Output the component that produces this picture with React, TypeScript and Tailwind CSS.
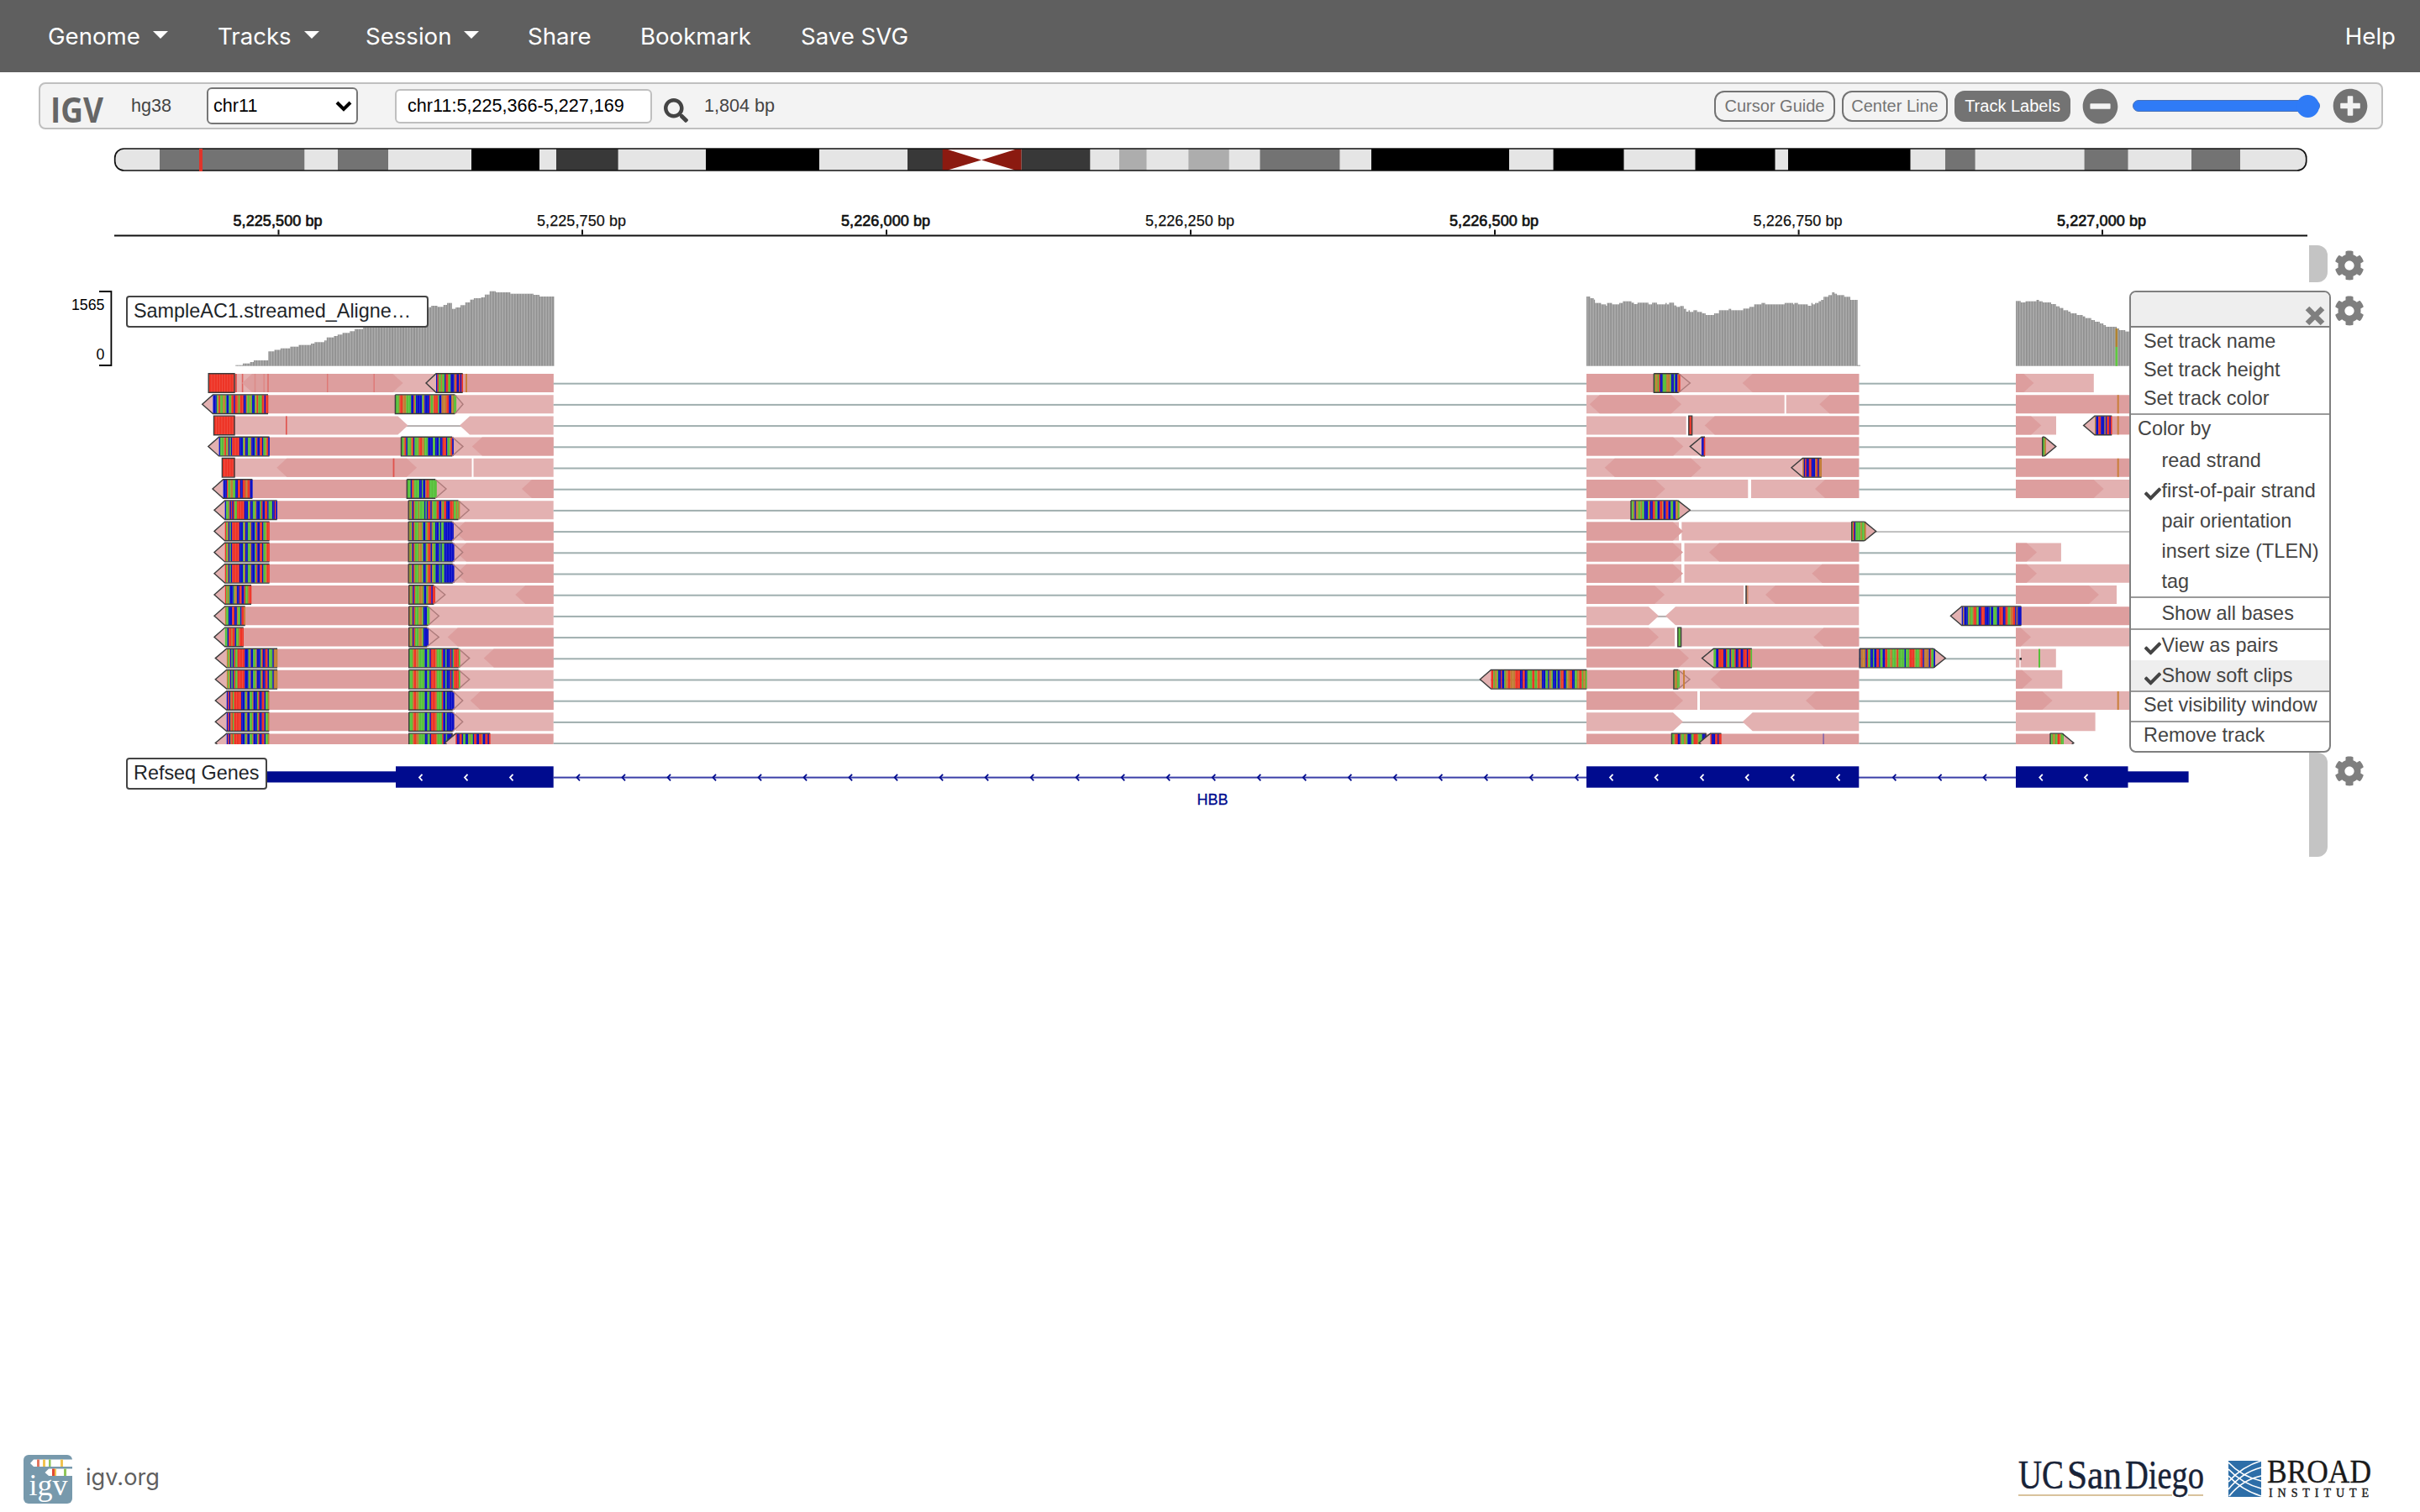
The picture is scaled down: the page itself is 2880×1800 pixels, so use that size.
import React from "react";
import { FaCog, FaSearch, FaCheck, FaMinusCircle, FaPlusCircle } from "react-icons/fa";

const BP = 1.447;
const ROW_TOP = 445;
const ROW_PITCH = 25.2;
const ROW_H = 22;

const NT: Record<string, string> = { A: "#57c03a", C: "#0c10c6", G: "#c17d34", T: "#ee3426" };

const L1 = "TAGCACTTTTTTCCCAGCCAAGCCCATCCTTCAAGT";
const L6 = "CAAGCTCTAATTTTTTCCCAGCCAAGCCCATCCTTCAAACCTC";
const LG = "GAGCACTAATTTTTTCCCAGCCAAGCCCATCCTTCAAACGGG";
const LB = "CTCGTATTTTTTCCCAGCCAAGCCCATCCTTCAAGT";
const LS = "TAGACCCAGGCCTTCCTAAGTT";
const LX = "CCCAGTAAGGACCAATTCTTGATTTCCGAAGACCAGTAAATTCTTT";
const R1 = "GAGCTAAAGGGACCAGTTCGAACCCACAACCCCCCCCC";
const R2 = "AAAGTTGGAAAAACCAACTTTTGAAAATCCACCCTCATTTT";
const R3 = "AAAGTTGGGAAAACCTACCCCCAGCCCCTAAGTTTACCGGGG";

type Shape =
  | { k: "d" | "l"; a: number; b: number; la?: boolean; ra?: boolean }
  | { k: "s"; a: number; b: number; q: string; tip?: number }
  | { k: "m"; a: number; w: number; c: string; o?: number }
  | { k: "dot"; a: number }
  | { k: "g"; a: number; b: number; c?: string };

const d = (a: number, b: number, la = false, ra = false): Shape => ({ k: "d", a, b, la, ra });
const l = (a: number, b: number, la = false, ra = false): Shape => ({ k: "l", a, b, la, ra });
const s = (a: number, b: number, q: string, tip?: number): Shape => ({ k: "s", a, b, q, tip });
const m = (a: number, w: number, c: string, o = 1): Shape => ({ k: "m", a, w, c, o });
const g = (a: number, b: number, c = "#a0afaf"): Shape => ({ k: "g", a, b, c });

const E1 = 658.7;
const E2 = 1888;
const E2R = 2212.3;
const E3 = 2399;
const END = 2540;
const GREY = "#bfbfbf";
const OR = "#c97f3a";
const RD = "#e0524c";

const rows: Shape[][] = [
  [
    l(279, E1), s(248.2, 279, "T"), m(280, 1.8, RD), m(287.8, 1.6, RD, 0.8), d(288, 479.5, true, true),
    m(302.8, 1.4, RD, 0.25), m(313.5, 1.4, RD, 0.3), m(318, 2, RD, 0.5), m(389, 1.4, RD, 0.5), m(444.5, 1.4, RD, 0.5),
    d(550.7, E1), s(519, 550.7, "CTAAGAACTTAACCCGTCCTCT", 507), m(554, 2, OR),
    g(E1, E2), l(E2, E2R), d(E2, 1968.3), s(1968.3, 1999.3, "AGGATCCAAAGGGACCACCGTTCT", 2011.3), d(2073.7, E2R, true),
    g(E2R, E3), l(E3, 2491.8), d(E3, 2420.4, false, true),
  ],
  [
    d(319, 470.4), l(539, E1), s(253.4, 319, LX, 240.7), s(470.4, 542.8, R3 + "TTCCGG", 551),
    g(E1, E2), l(E2, 2123.7), l(2125.7, E2R), d(1891.7, 2001, true, true), d(2165.3, E2R, true),
    g(E2R, E3), d(E3, END), m(2519.7, 2, OR),
  ],
  [
    g(470, 560, "#b5b0b0"), l(279, 485.5, false, true), s(254.5, 279, "T"), m(340, 1.6, RD), l(547, E1, true),
    g(E1, E2), l(E2, 2006.7), l(2009.3, E2R), s(2009.8, 2013.6, "TT"), d(2028.7, E2R, true),
    g(E2R, E3), l(E3, 2447), d(E3, 2429.3, false, true), d(2510, END), s(2492.9, 2513.2, "GCCTTCCCGCTTCT", 2479.6), m(2519.7, 2, OR),
  ],
  [
    d(320.6, 477.5), l(539, E1), s(260.5, 320.6, "CAAAG" + L1, 247.8), s(477.5, 539.6, "AAGTCAAAGTCAAAGTTGGAAACCCCAACCCACCTTTC", 551), d(561.8, E1, true),
    g(E1, E2), l(E2, E2R), d(E2, 2003.3, false, true), d(2029, E2R), s(2025, 2029, "CCT", 2011.3),
    g(E2R, E3), d(E3, 2431), s(2430.7, 2434.6, "AAG", 2446.8),
  ],
  [
    l(279, 561.5), l(563.5, E1), s(264.4, 279, "T"), d(329.3, 496, true, true), m(467.6, 1.8, RD),
    g(E1, E2), l(E2, E2R), d(1909.7, 2024.7, true, true), d(2160, E2R), s(2145.3, 2167.7, "GCTCCTTCCCGTCGG", 2132),
    g(E2R, E3), d(E3, END), m(2519.7, 2, OR),
  ],
  [
    d(300.4, 484.3), l(517, E1), s(265.6, 300.4, "CCCTAAGGAACCTTCCTTGGTT", 253), s(484.3, 519.5, "AAACTGAAAACCACCGTTAAA", 531), d(621, E1, true),
    g(E1, E2), l(E2, 2080.3), l(2084, E2R), d(E2, 1981.7, false, true), d(2160, E2R, true),
    g(E2R, E3), l(E3, END), d(E3, 2503.6, false, true),
  ],
  [
    d(329.7, 486.2), l(545, E1), s(267.6, 329.7, L6, 255), s(486.2, 547, "GAGCTAAAGAAAACACTTCGAAATTCCGATTCCCTTTAA", 558.2),
    g(E1, E2), g(2011, END, GREY), l(E2, 1942), s(1941, 1998.3, "AAGCGGAAGAACCCATCCTTAACCTTGCCTTCCAACCGG", 2011.3),
  ],
  [
    d(320.6, 486.2), l(539, E1), d(541, E1, true), s(267.6, 320.6, L1, 255), s(486.2, 539.6, R1, 550),
    g(E1, E2), g(2232, END, GREY), l(E2, 1998), l(2001.3, 2204), d(E2, 2003, false, true), s(2203.7, 2220.3, "ATCAAAAGAAGG", 2232.7),
  ],
  [
    d(320.6, 486.2), l(539, E1), d(543, E1, true), s(267.6, 320.6, L1, 255), s(486.2, 540.3, R1, 550.7),
    g(E1, E2), l(E2, 2001), l(2004.5, E2R), d(E2, 2003, false, true), d(2034, E2R, true),
    g(E2R, E3), l(E3, 2452.9), d(E3, 2424, false, true),
  ],
  [
    d(320.6, 486.2), l(539, E1), d(543, E1, true), s(267.6, 320.6, L1, 255), s(486.2, 540.3, R1, 550.7),
    g(E1, E2), l(E2, 2001), l(2004.5, E2R), d(E2, 2003, false, true), d(2156.4, E2R, true),
    g(E2R, E3), l(E3, END), d(E3, 2424, false, true),
  ],
  [
    d(299, 486.7), l(516, E1), s(267.7, 299, LS, 255), s(486.7, 517.7, "GAGCTAAAGGGACCAGTTCTT", 529.7), d(613.3, E1, true),
    g(E1, E2), l(E2, 2075), l(2077.3, E2R), m(2077.3, 1.6, "#3c3c3c"), m(2078.9, 1.6, "#d08a6a"), d(E2, 1981, false, true), d(2101, E2R, true),
    g(E2R, E3), l(E3, 2519), d(E3, 2497.9, false, true),
  ],
  [
    d(291.7, 486.7), l(509, E1), s(267.7, 291.7, "GAACCCTTCCGAACTT", 255), s(486.7, 511, "GAGCTAAAGGGACCCAA", 522.3),
    g(E1, E2), g(1962, 1994, "#b5b0b0"), l(E2, 1974, false, true), l(1982, E2R, true),
    d(2405, END), s(2334.6, 2405.4, "CGCCCAGAAGTTAACCTTTCCCCACCAAACCTTTCCTTAAGGTT", 2321.4),
  ],
  [
    d(289.7, 486.7), l(508, E1), s(267.7, 289.7, "AACTTGTTCAAGTTTT", 255), s(486.7, 509.7, "GAGCTAAAGGGACCCC", 522.3), d(532.7, E1, true),
    g(E1, E2), l(E2, 1993), l(1996, E2R), s(1996.8, 2000.6, "A"), d(E2, 1974, false, true), d(2158.3, E2R, true),
    g(E2R, E3), l(E3, END), d(E3, 2417, false, true),
  ],
  [
    d(330, 486.7), l(545, E1), s(269.7, 330, LG, 256.3), s(486.7, 547.3, R2, 558.7), d(575.7, E1, true),
    g(E1, E2), l(E2, E2R), d(E2, 2010, false, true), d(2084, E2R), s(2039.3, 2084.8, "AACCTTTTCCTAACGAATCCTTCCTTTCTT", 2025.5),
    g(E2R, E3), s(2213, 2302.7, "CGGGGCTAACCACCTTCAACCTTAAGGAAAGTAAAAACAAATTTTGAAAGTT", 2315.3), l(E3, 2403.4), l(2404.6, 2446.8), { k: "dot", a: 2404 }, m(2426, 2, NT.A),
  ],
  [
    d(330, 486.7), l(545, E1), s(269.7, 330, LG, 256.3), s(486.7, 547.3, R2, 558.7),
    g(E1, E2), l(E2, E2R), d(E2, 1993), s(1774.4, 1888.3, "TTAGGACCTCCAGGTTGGGGTTTTCCTTCCAAAATTAAGTGGCCCAACGGACCCACCGTTCCAGGTTCCAAGG", 1761.4), s(1991.9, 1998.6, "AGGAA", 2011), m(2003, 2, OR), d(2035.8, E2R, true),
    g(E2R, E3), l(E3, 2454.3), d(E3, 2418.6, false, true),
  ],
  [
    d(320.3, 486.7), l(539, E1), s(269.7, 320.3, LB, 256.3), s(486.7, 540.3, R2.slice(0, 33) + "CCCC", 550.7), d(559.7, E1, true),
    g(E1, E2), l(E2, 2020), l(2023, E2R), d(E2, 2003, false, true), d(2149, E2R, true),
    g(E2R, E3), l(E3, END), d(E3, 2442.5, false, true), m(2519.7, 2, OR),
  ],
  [
    d(320.3, 486.7), l(542, E1), s(269.7, 320.3, LB, 256.3), s(486.7, 540.3, R2.slice(0, 33) + "CCCC", 550.7),
    g(E1, E2), g(1991, 2086, "#b5b0b0"), l(E2, 2003, false, true), l(2073.7, E2R, true),
    g(E2R, E3), l(E3, 2493.6),
  ],
  [
    d(320.3, E1), s(269.7, 320.3, LB, 256.3), s(486.7, 538, R2.slice(0, 33) + "CC"), s(542.3, 583.3, "TCCTTCAACCAGAACTTCCTTGCCTTCT", 529.3),
    g(E1, E2), d(E2, E2R), s(1989.5, 2030, "AAGTTCCGAAGGACCCAATTTGAAACCC"), s(2035.4, 2048.4, "TCCCTTCTT", 2022), m(2169.3, 1.6, "#4a3fb0", 0.6),
    g(E2R, E3), d(E3, 2440), s(2440, 2455.7, "AAGGAATTGAAA", 2467.9),
  ],
];

function Strand({ sh, y }: { sh: Shape; y: number }) {
  const mid = y + ROW_H / 2;
  const bot = y + ROW_H;
  if (sh.k === "g") return <rect x={sh.a} y={mid - 0.3} width={sh.b - sh.a} height={2} fill={sh.c} />;
  if (sh.k === "dot") return <rect x={sh.a - 0.5} y={mid - 0.5} width={2.5} height={2.5} fill="#222" />;
  if (sh.k === "m") return <rect x={sh.a} y={y} width={sh.w} height={ROW_H} fill={sh.c} opacity={sh.o} />;
  if (sh.k === "s") {
    const n = Math.max(1, Math.round((sh.b - sh.a) / BP));
    const w = (sh.b - sh.a) / n;
    const left = sh.tip !== undefined && sh.tip < sh.a;
    const right = sh.tip !== undefined && !left;
    const base = right ? sh.b - 1.5 : sh.b;
    const covered = sh.b < 600 || (sh.b > 1998.5 && sh.b < 2000);
    return (
      <g>
        {left && <path d={`M${sh.a} ${y}L${sh.tip} ${mid}L${sh.a} ${bot}Z`} fill="#e3b1b1" />}
        {right && <path d={`M${base} ${y}L${sh.tip} ${mid}L${base} ${bot}Z`} fill="#e0a9a9" />}
        {Array.from({ length: n }, (_, i) => (
          <rect key={i} x={sh.a + i * w} y={y} width={w + 0.3} height={ROW_H} fill={NT[sh.q[i % sh.q.length]]} />
        ))}
        <path
          d={
            left
              ? `M${sh.b} ${y - 0.3}H${sh.a}L${sh.tip} ${mid}L${sh.a} ${bot + 0.3}H${sh.b}`
              : right
                ? `M${sh.a} ${y - 0.3}H${base}M${base} ${bot + 0.3}H${sh.a}V${y - 0.3}`
                : `M${sh.a} ${y - 0.3}H${sh.b}V${bot + 0.3}H${sh.a}Z`
          }
          fill="none"
          stroke="#3c3c3c"
          strokeWidth={1.4}
        />
        {right && (
          <path
            d={`M${base} ${y - 0.3}L${sh.tip} ${mid}L${base} ${bot + 0.3}`}
            fill="none"
            stroke={covered ? "#ad7b7b" : "#3c3c3c"}
            strokeWidth={1.4}
          />
        )}
      </g>
    );
  }
  const a = sh.la ? sh.a + 12 : sh.a;
  const b = sh.ra ? sh.b - 12 : sh.b;
  return (
    <path
      d={`M${a} ${y}H${b}${sh.ra ? `L${sh.b} ${mid}L${b} ${bot}` : `V${bot}`}H${a}${sh.la ? `L${sh.a} ${mid}` : ""}Z`}
      fill={sh.k === "d" ? "#dd9e9e" : "#e3b1b1"}
    />
  );
}

const COV_BASE = 435.7;
const cov: { start: number; end: number; pts: [number, number][] }[] = [
  {
    start: 280.3,
    end: 658.7,
    pts: [
      [280, 434.7], [289, 432.7], [297, 431], [302, 429], [313, 429], [319, 427.3], [320, 418.3], [327, 416.5], [334, 414.7], [345, 412.7],
      [356, 410.7], [370, 409], [374, 407.3], [386, 405.3], [389, 401.7], [397, 400], [402, 398.3], [408, 396.3], [416, 394.3], [422, 391.7],
      [432, 390], [440, 384], [460, 378], [480, 372], [500, 368], [511, 365.7], [513, 364], [521, 365.3], [527, 363], [532.5, 360.7],
      [538, 367.7], [542, 366], [548, 363.3], [554, 360], [559, 356.7], [564, 355], [572, 354], [577, 350.7], [582, 346.7], [590, 348],
      [608, 349.7], [635, 351], [642, 353], [658, 353],
    ],
  },
  {
    start: 1888,
    end: 2210,
    pts: (
      [
        [444, 69], [459, 75], [468, 80], [475, 92], [498, 97], [513, 102], [519, 92], [536, 97], [563, 92], [573, 86], [605, 91], [614, 96],
        [626, 91], [665, 97], [680, 91], [694, 97], [724, 92], [731, 97], [740, 91], [757, 101], [765, 106], [778, 103], [790, 113],
        [800, 123], [808, 118], [812, 124], [826, 118], [838, 124], [858, 129], [871, 135], [899, 129], [919, 118], [950, 113], [962, 118],
        [1004, 112], [1027, 106], [1042, 97], [1070, 92], [1082, 97], [1151, 92], [1182, 97], [1188, 92], [1200, 97], [1232, 102],
        [1247, 92], [1253, 97], [1262, 92], [1272, 86], [1283, 81], [1292, 70], [1307, 64], [1319, 54], [1330, 59], [1338, 64],
        [1363, 70], [1384, 81],
      ] as [number, number][]
    ).map(([x, y]) => [1740 + x / 3, 330 + y / 3]),
  },
  {
    start: 2399,
    end: 2536,
    pts: (
      [
        [277, 235], [292, 240], [308, 236], [348, 231], [354, 236], [368, 240], [394, 246], [410, 254], [425, 260], [435, 268], [452, 273],
        [458, 279], [480, 285], [498, 290], [510, 296], [530, 303], [540, 309], [555, 315], [570, 321], [577, 327], [615, 333], [620, 339],
        [640, 344],
      ] as [number, number][]
    ).map(([x, y]) => [2300 + x / 2.8, 280 + y / 3]),
  },
];

function Coverage() {
  return (
    <g>
      {cov.map((c, ci) => {
        const n = Math.round((c.end - c.start) / BP);
        return Array.from({ length: n }, (_, i) => {
          const x = c.start + i * BP;
          let top = c.pts[0][1];
          for (const p of c.pts) if (p[0] <= x + 0.7) top = p[1];
          return <rect key={`${ci}-${i}`} x={x} y={top} width={BP} height={COV_BASE - top} fill="#929292" />;
        });
      })}
      <rect x={2210} y={434.7} width={4} height={1} fill="#999" />
      <rect x={2517.5} y={391} width={2.6} height={22} fill="#b0832f" />
      <rect x={2517.5} y={413} width={2.6} height={22.7} fill="#5fc93f" />
    </g>
  );
}

const bands: [number, number, string][] = [
  [190, 362.3, "#737373"], [402, 462, "#737373"], [561, 642, "#000"], [662, 735.6, "#383838"], [840, 975, "#000"], [1080, 1122, "#383838"],
  [1215.5, 1297.3, "#383838"], [1332, 1364.5, "#adadad"], [1414.4, 1462.7, "#adadad"], [1499.5, 1594.4, "#737373"], [1632, 1796, "#000"],
  [1848.6, 1932.5, "#000"], [2017.5, 2112.5, "#000"], [2128, 2273.5, "#000"], [2315, 2350.6, "#737373"], [2480.6, 2532.5, "#737373"],
  [2608, 2666, "#737373"],
];

function Ideogram() {
  return (
    <svg className="ml-[134px] mt-5 block h-8 w-[2612px] shrink-0" viewBox="134 174 2612 32">
      <rect x={136.7} y={177} width={2608} height={26} rx={11} fill="#e5e5e5" />
      {bands.map(([a, b, c]) => (
        <rect key={a} x={a} y={177} width={b - a} height={26} fill={c} />
      ))}
      <rect x={1121.7} y={177} width={93.8} height={26} fill="#8b1a10" />
      <path d="M1128 178H1208L1168 190.500ZM1128 202.500H1208L1168 190.500Z" fill="#fff" />
      <rect x={136.7} y={177} width={2608} height={26} rx={11} fill="none" stroke="#111" strokeWidth={1.7} />
      <rect x={237} y={177} width={4} height={27} fill="#e0342a" />
    </svg>
  );
}

const ticks: [number, string][] = [
  [331.5, "5,225,500 bp"], [693, "5,225,750 bp"], [1055, "5,226,000 bp"], [1417, "5,226,250 bp"], [1779, "5,226,500 bp"], [2140.6, "5,226,750 bp"],
  [2502, "5,227,000 bp"],
];

function Ruler() {
  return (
    <svg className="ml-[136px] mt-10 block h-10 w-[2610px] shrink-0" viewBox="136 246 2610 40">
      {ticks.map(([x, t], i) => (
        <g key={t}>
          <text
            x={x - 1} y={269} textAnchor="middle" fontSize={18} fontFamily="Liberation Sans, sans-serif" fill="#111" textLength={106}
            stroke="#111" strokeWidth={i % 2 === 0 ? 0.7 : 0.25}
          >
            {t}
          </text>
          <rect x={x - 1} y={273.5} width={2} height={6} fill="#111" />
        </g>
      ))}
      <rect x={136} y={279.5} width={2610} height={2} fill="#111" />
    </svg>
  );
}

const NAVY = "#000b8e";
const lineArrows: number[] = [];
for (let i = 0; i < 23; i++) lineArrows.push(688 + i * 54.02);
lineArrows.push(2254.4, 2308.6, 2362);
const exonArrows = [501, 555, 609, 1918, 1971.7, 2026, 2079.7, 2133.8, 2188, 2429.3, 2483];

function GeneTrack() {
  return (
    <svg className="block h-[134px] w-[2610px]" viewBox="136 886 2610 134">
      <rect x={E1} y={924.6} width={E3 - E1} height={2} fill="#3b3fa8" />
      <rect x={300} y={918.3} width={171} height={13.2} fill={NAVY} />
      <rect x={2532} y={918.3} width={72.6} height={13.2} fill={NAVY} />
      {[[471, 658.7], [1888, 2212.3], [2399, 2532.5]].map(([a, b]) => (
        <rect key={a} x={a} y={912.3} width={b - a} height={25.4} fill={NAVY} />
      ))}
      {lineArrows.map((x) => (
        <path key={x} d={`M${x + 2} ${921.8}L${x - 1.5} 925.6L${x + 2} 929.4`} fill="none" stroke={NAVY} strokeWidth={1.8} />
      ))}
      {exonArrows.map((x) => (
        <path key={x} d={`M${x + 1.5} ${921.8}L${x - 2} 925.6L${x + 1.5} 929.4`} fill="none" stroke="#fff" strokeWidth={1.8} />
      ))}
      <text x={1443} y={958} textAnchor="middle" fontSize={18} fontFamily="Liberation Sans, sans-serif" fill={NAVY} stroke={NAVY} strokeWidth={0.3}>
        HBB
      </text>
    </svg>
  );
}

function TrackLabel({ children, className }: { children: React.ReactNode; className: string }) {
  return (
    <div
      className={`absolute left-[14px] flex items-center whitespace-nowrap rounded border-2 border-[#444] bg-white pl-[7px] text-[23.4px] leading-none text-[#212529] ${className}`}
    >
      {children}
    </div>
  );
}

function Gear({ className = "" }: { className?: string }) {
  return <FaCog className={`size-[36px] text-[#7f7f7f] ${className}`} />;
}

function MenuItem({ children, className = "", checked, indent }: { children: string; className?: string; checked?: boolean; indent?: boolean }) {
  return (
    <div className={`flex shrink-0 items-center whitespace-nowrap pl-[15px] ${className}`}>
      {(indent || checked) && <span className="w-[21.5px] shrink-0">{checked && <FaCheck className="ml-px mt-[5px] size-[20px]" />}</span>}
      <span>{children}</span>
    </div>
  );
}

function TrackMenu() {
  const sep = "border-t-2 border-[#9a9a9a]";
  return (
    <div className="absolute left-[2534px] top-0 z-10 flex h-[550px] w-[240px] flex-col overflow-hidden rounded-lg border-2 border-[#7f7f7f] bg-white text-[23.4px] leading-none text-[#444]">
      <div className="flex h-[42px] shrink-0 items-end justify-end border-b-2 border-[#7f7f7f] bg-[#eeeeee] pr-[5px]">
        <svg className="size-[24px]" viewBox="0 0 24 24">
          <path d="M3 3L21 21M21 3L3 21" stroke="#7f7f7f" strokeWidth={6.5} />
        </svg>
      </div>
      <MenuItem className="h-[34px]">Set track name</MenuItem>
      <MenuItem className="h-[34px]">Set track height</MenuItem>
      <MenuItem className="h-[34px]">Set track color</MenuItem>
      <div className={`flex h-[38px] shrink-0 items-center pb-[2px] pl-[8px] ${sep}`}>Color by</div>
      <MenuItem className="h-[36px] pt-[2px]" indent>read strand</MenuItem>
      <MenuItem className="h-[36px] pt-[2px]" checked>first-of-pair strand</MenuItem>
      <MenuItem className="h-[36px] pt-[2px]" indent>pair orientation</MenuItem>
      <MenuItem className="h-[36px] pt-[2px]" indent>insert size (TLEN)</MenuItem>
      <MenuItem className="h-[36px] pt-[2px]" indent>tag</MenuItem>
      <MenuItem className={`h-[38px] pt-[2px] ${sep}`} indent>Show all bases</MenuItem>
      <MenuItem className={`h-[38px] pt-[2px] ${sep}`} checked>View as pairs</MenuItem>
      <MenuItem className="h-[36px] bg-[#eeeeee] pt-[2px]" checked>Show soft clips</MenuItem>
      <MenuItem className={`h-[36px] pb-[3px] ${sep}`}>Set visibility window</MenuItem>
      <MenuItem className={`h-[36px] pb-[3px] ${sep}`}>Remove track</MenuItem>
    </div>
  );
}

function Caret() {
  return <span className="ml-[15px] mb-[3px] border-x-[9px] border-t-[9px] border-x-transparent border-t-white" />;
}

function NavBar() {
  return (
    <nav className="flex h-[86px] shrink-0 items-center bg-[#5f5f5f] px-[57px] pt-px font-[Inter,sans-serif] text-[27.6px] text-white">
      <div className="flex w-[202px] items-center">Genome<Caret /></div>
      <div className="flex w-[176px] items-center">Tracks<Caret /></div>
      <div className="flex w-[193px] items-center">Session<Caret /></div>
      <div className="w-[134px]">Share</div>
      <div className="w-[191px]">Bookmark</div>
      <div>Save SVG</div>
      <div className="ml-auto -mr-[28px]">Help</div>
    </nav>
  );
}

function Toolbar() {
  const btn = "flex h-[37px] items-center justify-center rounded-xl border-2 border-[#737373] text-[20px]";
  return (
    <div className="mx-[46px] mt-3 flex h-14 w-[2790px] shrink-0 items-center rounded-lg border-2 border-[#bfbfbf] bg-[#f3f3f3] pl-[12px] pr-[16px] text-[21.6px] text-[#444]">
      <svg className="mt-[9px] h-[52px] w-[66px]" viewBox="-2 -9 66 52">
        <text x={-2} y={32} fontSize={41} fontWeight={700} fontFamily="Open Sans, sans-serif" fill="#666" textLength={63} lengthAdjust="spacingAndGlyphs">IGV</text>
      </svg>
      <span className="ml-[30px] w-[90px] pt-px">hg38</span>
      <div className="flex h-[44px] w-[180px] items-center justify-between rounded-md border-2 border-[#767676] bg-white pl-[6px] pr-[5px] pt-px text-black">
        chr11
        <svg className="h-[13px] w-[20px]" viewBox="0 0 20 13">
          <path d="M2 2L10 10L18 2" fill="none" stroke="#000" strokeWidth={4} />
        </svg>
      </div>
      <div className="ml-[44px] flex h-[41px] w-[306px] items-center rounded-md border-2 border-[#bfbfbf] bg-white pl-[13px] pt-px text-black">
        chr11:5,225,366-5,227,169
      </div>
      <FaSearch className="ml-[14px] mt-[10px] size-[29px] text-[#444]" />
      <span className="ml-[19px] pt-px">1,804 bp</span>
      <div className={`${btn} ml-auto w-[144px] text-[#737373]`}>Cursor Guide</div>
      <div className={`${btn} ml-2 w-[126px] text-[#737373]`}>Center Line</div>
      <div className={`${btn} ml-2 w-[138px] bg-[#737373] text-white`}>Track Labels</div>
      <FaMinusCircle className="ml-[14px] size-[43px] text-[#737373]" />
      <div className="ml-[17px] flex h-[14px] w-[223px] items-center justify-end rounded-full border border-[#4a72b8] bg-[#2f7bf6]">
        <span className="size-[27px] shrink-0 rounded-full bg-[#2f7bf6]" />
      </div>
      <FaPlusCircle className="ml-[15px] size-[42px] text-[#737373]" />
    </div>
  );
}

function Footer() {
  return (
    <footer className="mt-auto flex h-[68px] items-start justify-between pl-[28px] pr-[52px]">
      <div className="flex h-[58px] items-center gap-[16px]">
        <svg className="size-[58px]" viewBox="0 0 58 58">
          <rect width={58} height={58} rx={6} fill="#7799ac" />
          <path d="M8 10L12 5.500H58V14H12ZM25.500 21L30 16.500H58V25H30Z" fill="#fff" />
          <path d="M16 5.500h3v8.500h-3z" fill="#e2745e" />
          <path d="M23 5.500h3v8.500h-3zM44 5.500h3v8.500h-3zM37 16.500h2v8.500h-2z" fill="#f1c350" />
          <path d="M30 5.500h2.500v8.500h-2.500zM48 16.500h3v8.500h-3z" fill="#8fc65a" />
          <path d="M34 16.500h3v8.500h-3z" fill="#e04a34" />
          <text x={6.5} y={47.5} fontSize={36} fontFamily="Liberation Serif, serif" textLength={46} lengthAdjust="spacingAndGlyphs" fill="#fff">igv</text>
        </svg>
        <span className="mb-1 font-[Inter,sans-serif] text-[27.2px] text-[#5f5f5f]">igv.org</span>
      </div>
      <div className="flex gap-[18px]">
        <svg className="h-[60px] w-[232px]" viewBox="2396 1732 232 60">
          <rect x={2402} y={1779} width={220} height={2} fill="#d9c29c" />
          <g fontSize={49} fontFamily="Liberation Serif, serif" fill="#182338" stroke="#182338" strokeWidth={0.5}>
            <text x={2402} y={1772} textLength={54} lengthAdjust="spacingAndGlyphs">UC</text>
            <text x={2460} y={1772} textLength={65} lengthAdjust="spacingAndGlyphs">San</text>
            <rect x={2585} y={1777} width={19} height={6} fill="#fff" stroke="none" />
            <text x={2529} y={1772} textLength={94} lengthAdjust="spacingAndGlyphs">Diego</text>
          </g>
        </svg>
        <svg className="h-[60px] w-[182px]" viewBox="2646 1732 182 60">
          <rect x={2652} y={1739} width={39} height={43} fill="#2d6ea8" />
          <g fill="none" stroke="#fff" strokeWidth={1.7}>
            <path d="M2652 1764Q2668 1746 2691 1739" />
            <path d="M2652 1773Q2668 1753 2691 1747" />
            <path d="M2653 1781Q2668 1762 2691 1757" />
            <path d="M2652 1741Q2668 1758 2691 1763" />
            <path d="M2652 1749Q2668 1766 2691 1772" />
            <path d="M2652 1757Q2668 1774 2691 1781" />
          </g>
          <text x={2698} y={1765} fontSize={41} fontFamily="Liberation Serif, serif" textLength={124} lengthAdjust="spacingAndGlyphs" fill="#1a1a1a" stroke="#1a1a1a" strokeWidth={0.4}>BROAD</text>
          <text x={2700} y={1781.7} fontSize={14} fontFamily="Liberation Serif, serif" textLength={119} stroke="#1a1a1a" strokeWidth={0.4} fill="#1a1a1a">INSTITUTE</text>
        </svg>
      </div>
    </footer>
  );
}

export default function App() {
  return (
    <div className="flex h-[1800px] w-[2880px] flex-col overflow-hidden bg-white font-['Liberation_Sans',sans-serif]">
      <NavBar />
      <Toolbar />
      <Ideogram />
      <Ruler />
      <div className="mt-[6px] flex h-11 pl-[2748px]">
        <div className="h-11 w-[22px] rounded-r-[12px] bg-[#c4c4c4]" />
        <Gear className="ml-[8px] mt-[6px]" />
      </div>
      <section className="relative mt-[10px] flex h-[540px]">
        <svg className="block h-[540px] w-[136px] shrink-0" viewBox="0 346 136 540">
          <path d="M118 347H132.400V435H118" fill="none" stroke="#000" strokeWidth={1.8} />
          <text x={124.5} y={369} textAnchor="end" fontSize={17.8} fontFamily="Liberation Sans, sans-serif">1565</text>
          <text x={124.5} y={427.7} textAnchor="end" fontSize={17.8} fontFamily="Liberation Sans, sans-serif">0</text>
        </svg>
        <div className="relative w-[2610px] shrink-0">
          <svg className="block h-[540px] w-[2610px]" viewBox="136 346 2610 540">
            <Coverage />
            {rows.map((row, i) => (
              <g key={i}>
                {row.map((sh, j) => (
                  <Strand key={j} sh={sh} y={ROW_TOP + i * ROW_PITCH} />
                ))}
              </g>
            ))}
          </svg>
          <TrackLabel className="top-[6px] h-[38px] w-[360px]">SampleAC1.streamed_Aligne…</TrackLabel>
        </div>
        <Gear className="ml-[32px] mt-[6px]" />
        <TrackMenu />
      </section>
      <section className="flex h-[134px] shrink-0">
        <div className="relative ml-[136px] w-[2612px]">
          <GeneTrack />
          <TrackLabel className="top-[16px] h-[38px] w-[168px]">Refseq Genes</TrackLabel>
        </div>
        <div className="mt-[10px] h-[124px] w-[22px] rounded-r-[12px] bg-[#c4c4c4]" />
        <Gear className="ml-[8px] mt-[14px]" />
      </section>
      <Footer />
    </div>
  );
}
